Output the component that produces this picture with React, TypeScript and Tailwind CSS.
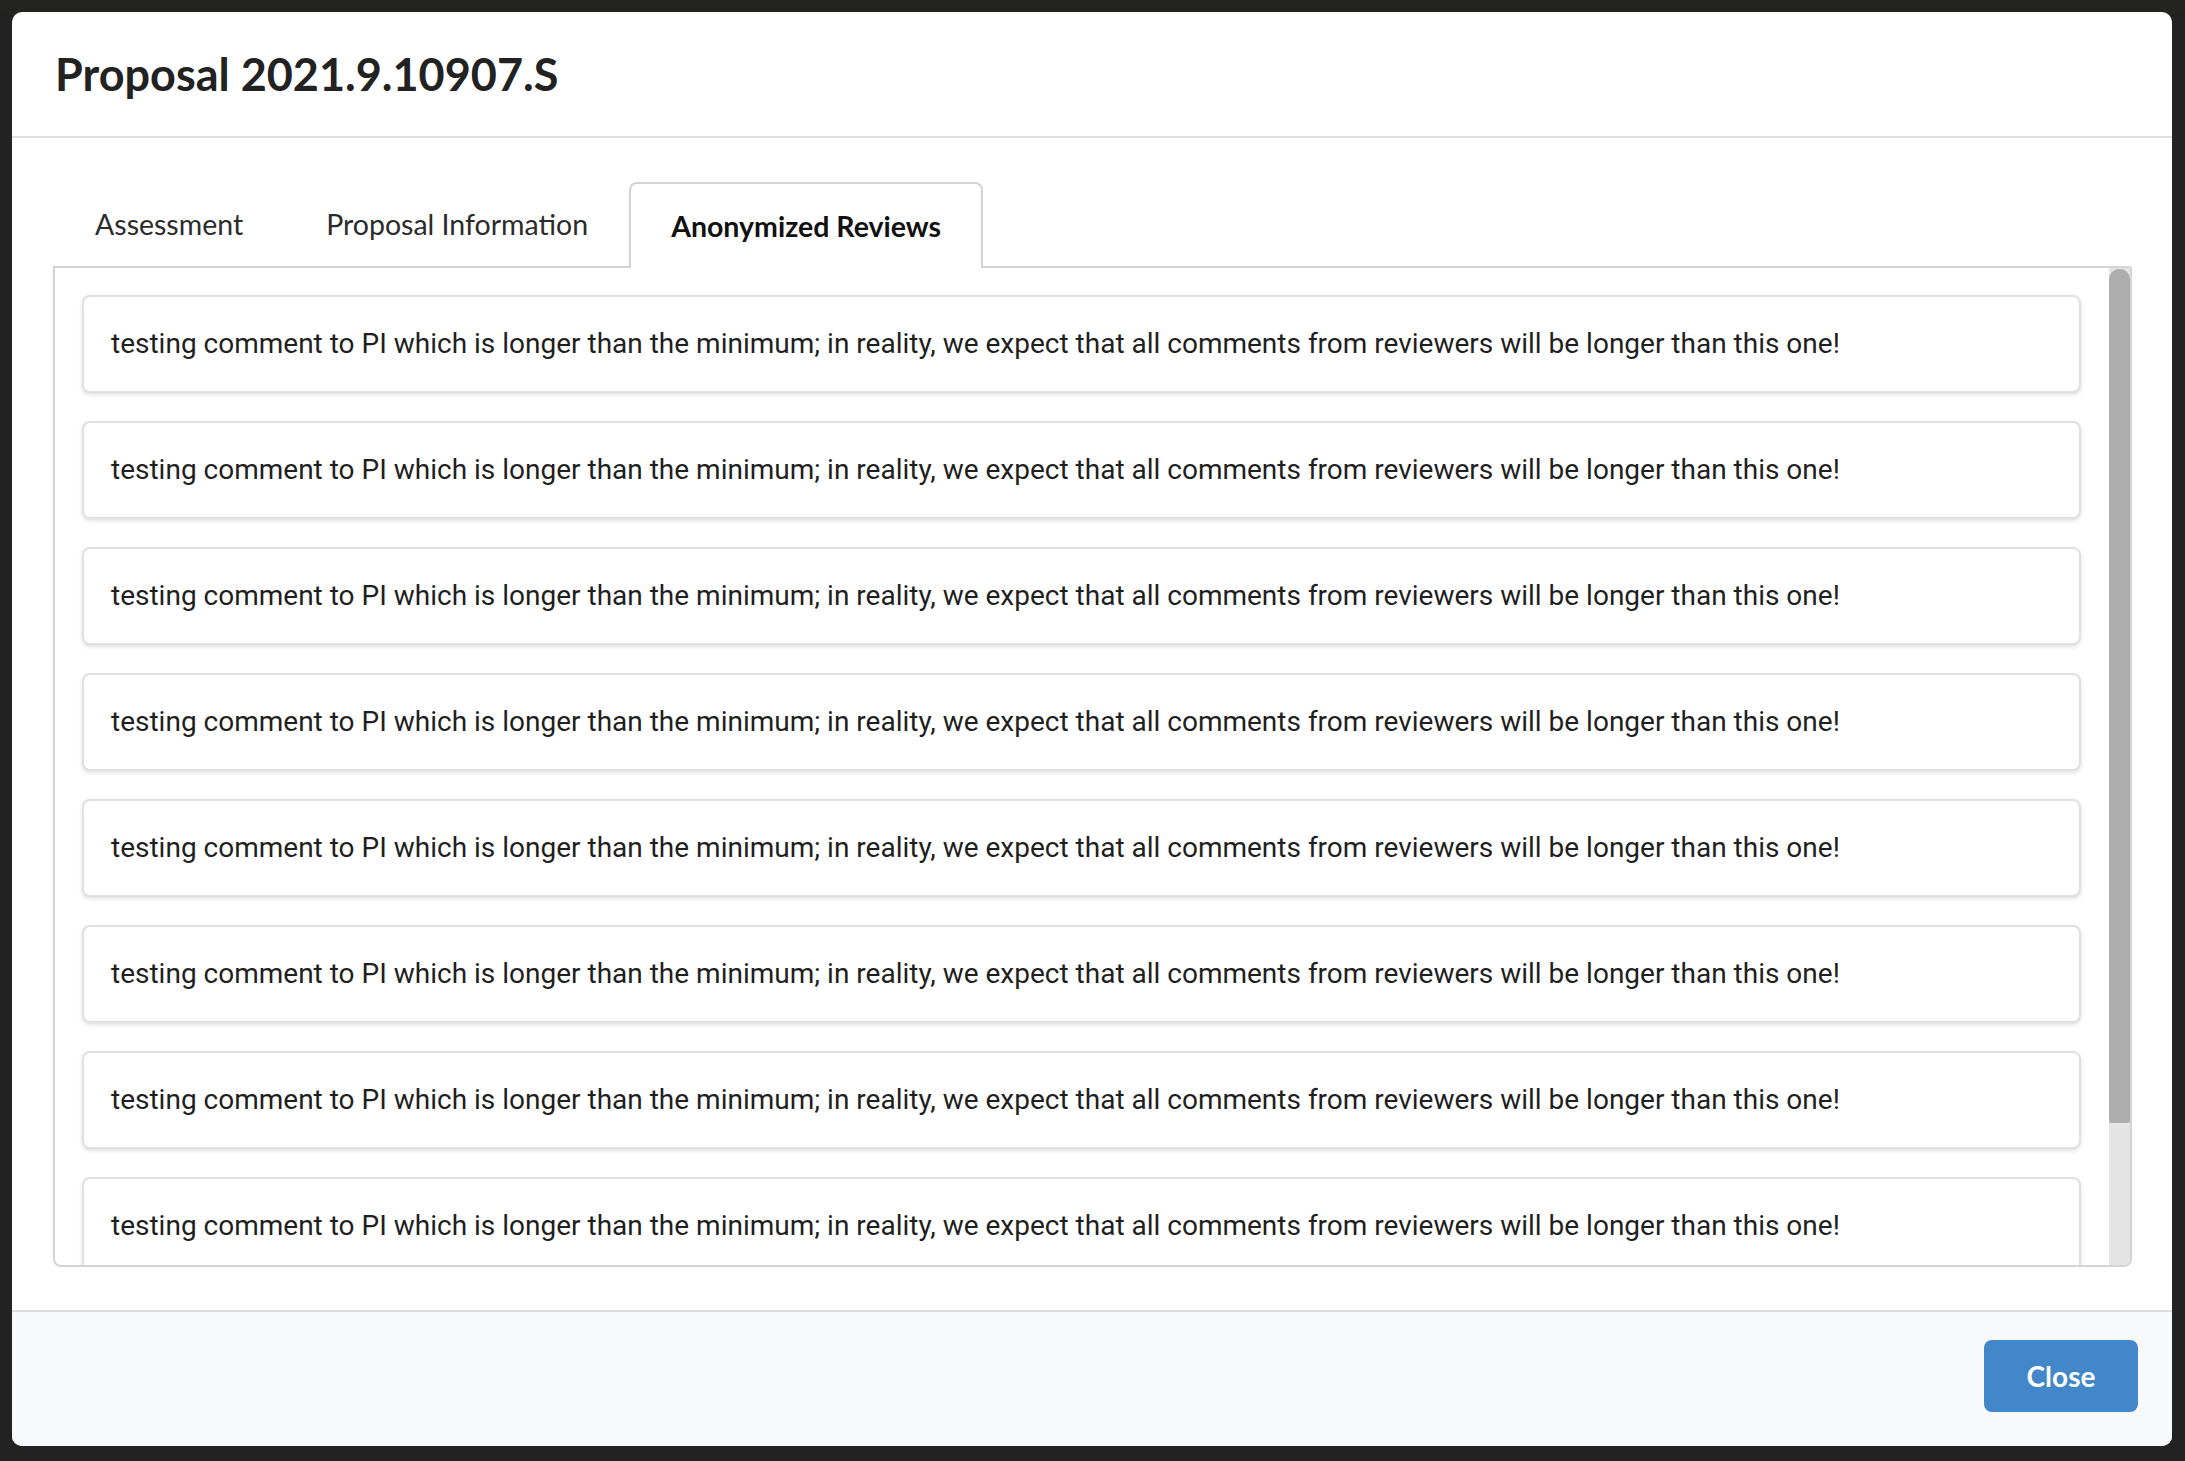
import React from "react";

const COMMENT =
  "testing comment to PI which is longer than the minimum; in reality, we expect that all comments from reviewers will be longer than this one!";

export default function App() {
  const tabs = [
    { label: "Assessment", active: false },
    { label: "Proposal Information", active: false },
    { label: "Anonymized Reviews", active: true },
  ];
  const cards = Array.from({ length: 9 });
  return (
    <div className="w-full h-[1461px] bg-[#222222] overflow-hidden flex flex-col">
      <div className="h-[12px] bg-[#23241f]" />
      <div className="pl-[12px] flex">
        <div className="w-[2160px] h-[1434px] bg-white rounded-[10px] overflow-hidden flex flex-col font-['Lato',sans-serif]">
          {/* header */}
          <div className="h-[126px] shrink-0 border-b-2 border-[#dedede] flex items-center px-[43px]">
            <h1 className="text-[45px] font-bold text-[#222222] leading-[1.2]">
              Proposal 2021.9.10907.S
            </h1>
          </div>
          {/* body */}
          <div className="flex-1 pt-[44px] pl-[41px] pr-[40px] pb-[42px] flex flex-col">
            <div className="flex h-[84px] shrink-0">
              {tabs.map((t) => (
                <div
                  key={t.label}
                  className={
                    t.active
                      ? "relative z-10 h-[86px] px-[40px] flex items-center border-2 border-b-0 border-[#d4d4d4] rounded-t-[8px] bg-white text-[28.5px] font-bold text-[#111111]"
                      : "h-[84px] pl-[42px] pr-[41px] flex items-center text-[28.5px] text-[#2b2b2b]"
                  }
                >
                  {t.label}
                </div>
              ))}
            </div>
            <div className="h-[1001px] border-2 border-[#d4d4d4] rounded-b-[8px] rounded-tr-[3px] bg-white overflow-hidden flex">
              <div className="flex-1 overflow-hidden pl-[27px] pr-[28px] py-[27px] flex flex-col gap-[28px]">
                {cards.map((_, i) => (
                  <div
                    key={i}
                    className="h-[98px] shrink-0 border-2 border-[#e0e0e0] rounded-[8px] bg-white shadow-[0_2px_4px_rgba(0,0,0,0.12)] flex items-center px-[27px]"
                  >
                    <p className="font-['Roboto',sans-serif] text-[28px] text-[#1f1f1f] whitespace-nowrap">
                      {COMMENT}
                    </p>
                  </div>
                ))}
              </div>
              <div className="w-[21px] shrink-0 bg-[#e4e4e4] flex flex-col">
                <div className="h-[854px] mt-[1px] bg-[#adadad] rounded-t-[10px] rounded-b-[2px]" />
              </div>
            </div>
          </div>
          {/* footer */}
          <div className="h-[136px] shrink-0 border-t-2 border-[#dcdcdc] bg-[#f8f9fa] flex items-center justify-end pr-[34px]">
            <button className="w-[154px] h-[72px] -mt-[7px] rounded-[8px] bg-[#4287ca] text-white text-[28px] font-bold">
              Close
            </button>
          </div>
        </div>
      </div>
    </div>
  );
}
